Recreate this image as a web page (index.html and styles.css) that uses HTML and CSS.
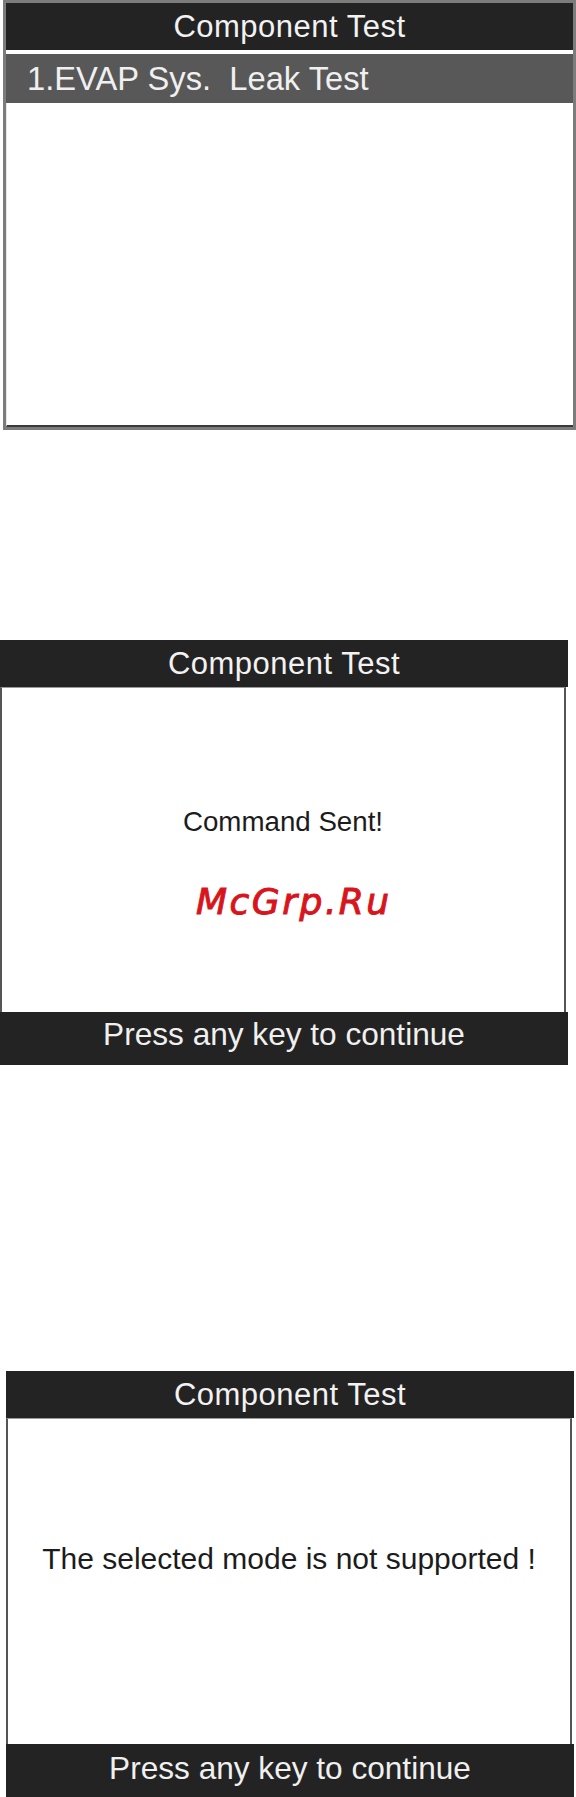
FILE: index.html
```html
<!DOCTYPE html>
<html>
<head>
<meta charset="utf-8">
<link rel="stylesheet" href="styles.css">
</head>
<body>
<div class="page">
  <section class="screen screen-menu">
    <div class="title">Component Test</div>
    <div class="title-rule"></div>
    <div class="menu-item">1.EVAP Sys.&nbsp; Leak Test</div>
    <div class="menu-body"></div>
  </section>

  <section class="screen screen-sent">
    <div class="title">Component Test</div>
    <div class="body body-sent">
      <div class="message message-sent">Command Sent!</div>
      <div class="watermark">McGrp.Ru</div>
    </div>
    <div class="footer">Press any key to continue</div>
  </section>

  <section class="screen screen-unsupported">
    <div class="title">Component Test</div>
    <div class="body body-unsupported">
      <div class="message message-unsupported">The selected mode is not supported !</div>
    </div>
    <div class="footer footer-last">Press any key to continue</div>
  </section>
</div>
</body>
</html>
```

FILE: styles.css
```css
html, body {
  margin: 0;
  padding: 0;
  background: #ffffff;
}

body {
  font-family: "Liberation Sans", Arial, sans-serif;
  width: 576px;
  height: 1797px;
  overflow: hidden;
}

.page {
  display: flex;
  flex-direction: column;
}

.screen {
  display: flex;
  flex-direction: column;
  box-sizing: border-box;
}

.title {
  height: 47px;
  background: #232323;
  color: #f2f2f2;
  font-size: 31px;
  letter-spacing: 0.5px;
  display: flex;
  align-items: center;
  justify-content: center;
  line-height: 1;
  flex: none;
}

/* Screen 1: menu */
.screen-menu {
  margin-left: 3px;
  width: 573px;
  height: 430px;
  border: 3px solid #7c7c7c;
  background: #ffffff;
}

.title-rule {
  height: 4px;
  background: #ffffff;
  flex: none;
}

.menu-item {
  height: 49px;
  background: #585858;
  color: #f0f0f0;
  font-size: 32.7px;
  line-height: 1;
  display: flex;
  align-items: center;
  padding-left: 21px;
  padding-top: 2px;
  box-sizing: border-box;
  flex: none;
}

.menu-body {
  flex: 1;
  background: #ffffff;
  border-left: 1px solid #e6e6e6;
  border-bottom: 2px solid #3a3a3a;
}

/* Screen 2 and 3 */
.screen-sent {
  margin-top: 210px;
  width: 568px;
  height: 425px;
}

.screen-unsupported {
  margin-top: 306px;
  margin-left: 6px;
  width: 568px;
  height: 426px;
}

.body {
  position: relative;
  flex: 1;
  background: #ffffff;
  border-left: 2px solid #555555;
  border-right: 2px solid #555555;
  border-top: 1px solid #9a9a9a;
  box-sizing: border-box;
  display: flex;
  flex-direction: column;
  align-items: center;
}

.body-sent {
  padding-top: 120px;
  margin-right: 2px;
}

.body-unsupported {
  padding-top: 125px;
  margin-right: 2px;
}

.message {
  color: #1c1c1c;
  line-height: 1;
  white-space: nowrap;
}

.message-sent {
  font-size: 27.7px;
}

.message-unsupported {
  font-size: 30px;
}

.watermark {
  position: absolute;
  left: 194px;
  top: 196px;
  font-family: "DejaVu Sans", sans-serif;
  font-style: italic;
  font-size: 36px;
  line-height: 1;
  letter-spacing: 2.5px;
  color: #d8141c;
  -webkit-text-stroke: 1px #d8141c;
}

.footer {
  height: 53px;
  background: #232323;
  color: #f0f0f0;
  font-size: 31.6px;
  line-height: 1;
  display: flex;
  align-items: center;
  justify-content: center;
  padding-bottom: 8px;
  box-sizing: border-box;
  flex: none;
}

.footer-last {
  padding-bottom: 3px;
}
```
